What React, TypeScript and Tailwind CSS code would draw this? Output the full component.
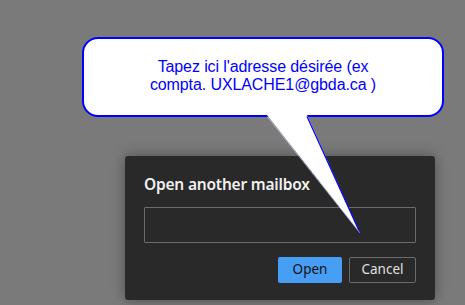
import React from "react"

export default function App() {
  return (
    <div className="relative w-[465px] h-[305px] overflow-hidden bg-[#7a7a7a]" style={{ fontFamily: '"Noto Sans", "Open Sans", sans-serif' }}>
      <div className="pt-[156px] pl-[125px]">
        <div className="w-[310px] h-[144px] bg-[#292929] rounded-[3px] shadow-[0_0_14px_rgba(0,0,0,0.35)] pt-[17px] px-[19px]">
          <h2 className="text-[15.5px] font-semibold text-[#f0f0f0] leading-[22px] tracking-[-0.2px]">Open another mailbox</h2>
          <div className="mt-[12px] h-[36px] w-[272px] border border-[#6b6b6b] rounded-[1px]"></div>
          <div className="mt-[14px] flex justify-end gap-[7px]">
            <button className="w-[64px] h-[26px] rounded-[2px] bg-[#479ef5] text-[13.5px] text-[#111] leading-none">Open</button>
            <button className="w-[67px] h-[26px] rounded-[2px] border border-[#6b6b6b] text-[13.5px] text-[#e0e0e0] leading-none">Cancel</button>
          </div>
        </div>
      </div>

      {/* callout bubble */}
      <div
        className="absolute left-[82px] top-[37px] w-[362px] h-[80px] bg-white border-2 border-[#0000ff] rounded-[16px] flex flex-col items-center justify-center pb-[2px] text-[#0000ff] text-[16px] leading-[18px] text-center tracking-[-0.1px]"
        style={{ fontFamily: '"Liberation Sans", Arial, sans-serif' }}
      >
        <span>Tapez ici l'adresse désirée (ex</span>
        <span>compta. UXLACHE1@gbda.ca )</span>
      </div>
      <svg className="absolute left-0 top-0" width="465" height="305" viewBox="0 0 465 305">
        <polygon points="267,115 307,115 360,233" fill="#fff" />
        <line x1="307" y1="116.5" x2="360" y2="233" stroke="#0000ff" strokeWidth="1.2" />
        <line x1="267" y1="116.5" x2="360" y2="233" stroke="#c8c8ff" strokeWidth="0.6" />
      </svg>
    </div>
  )
}
